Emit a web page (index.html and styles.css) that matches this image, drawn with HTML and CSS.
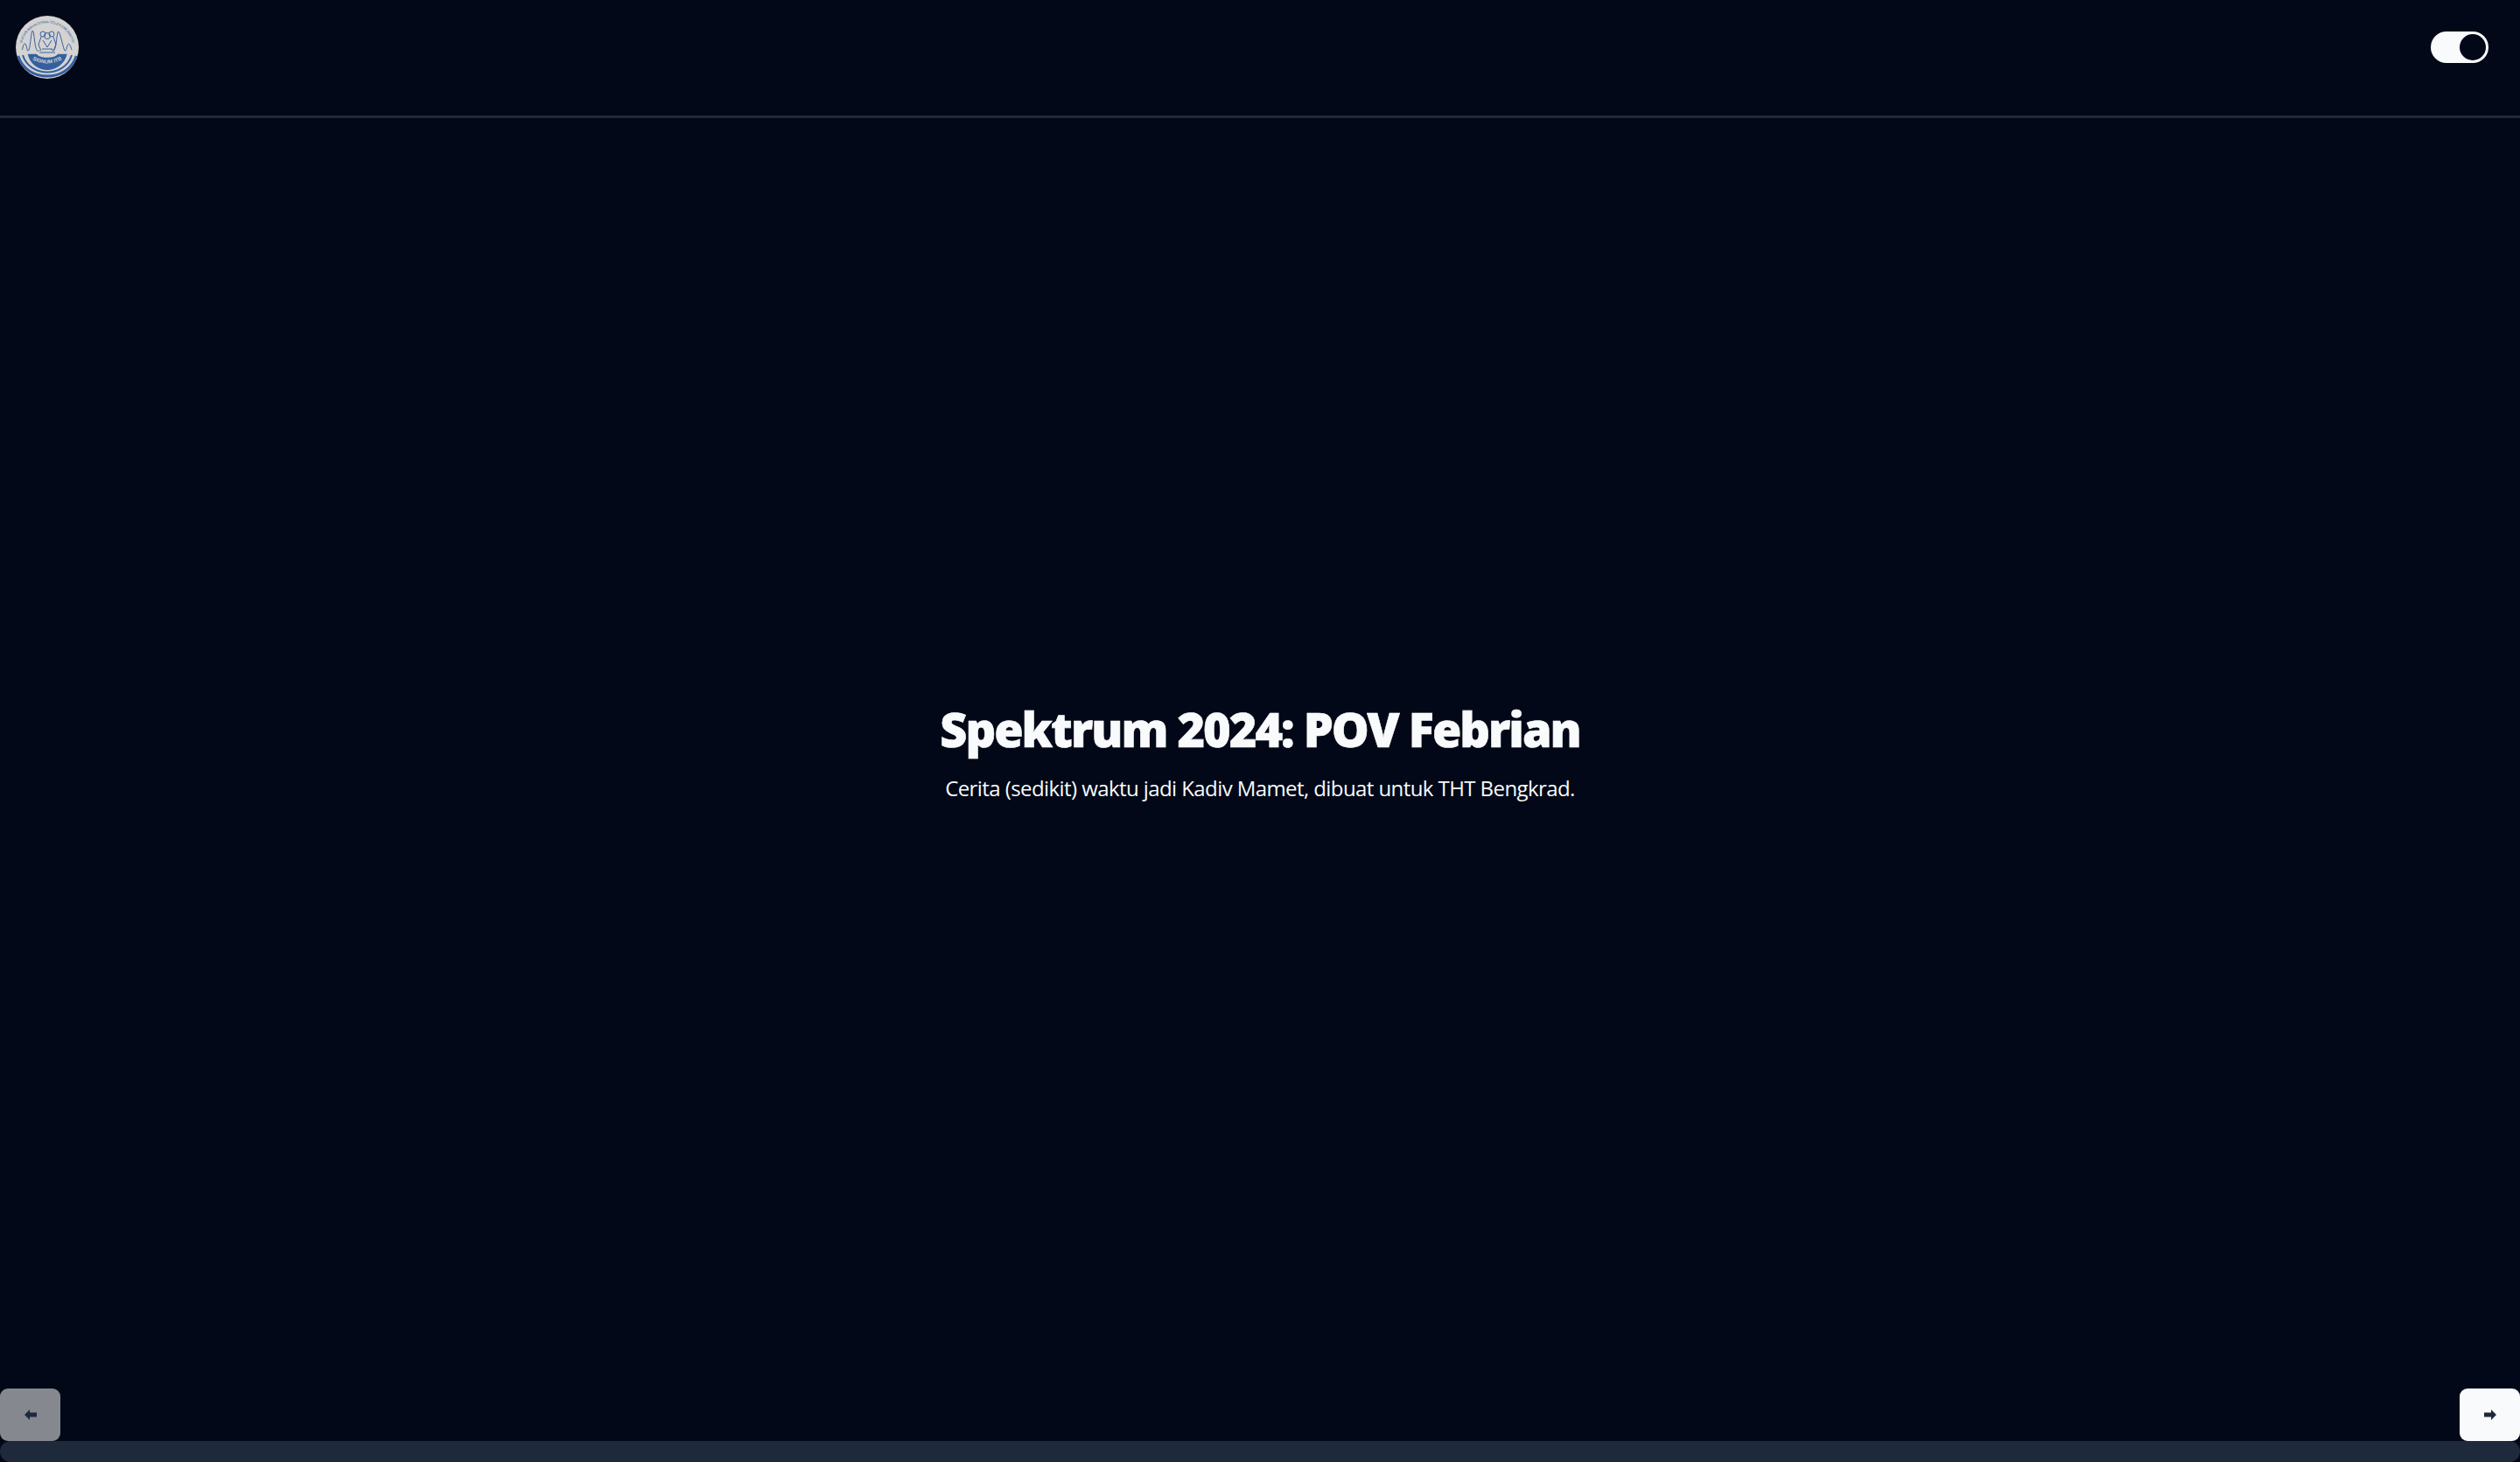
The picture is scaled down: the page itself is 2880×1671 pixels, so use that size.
FILE: index.html
```html
<!DOCTYPE html>
<html lang="en">
<head>
    <meta charset="UTF-8">
    <meta name="viewport" content="width=device-width, initial-scale=1.0">
    <title>Spektrum 2024: POV Febrian</title>
    <link rel="stylesheet" href="styles.css">
</head>
<body>
    <header class="topbar">
        <svg class="logo" viewBox="0 0 72 72">
            <defs>
                <path id="logo-arc" d="M6.5 38 A29.5 29.5 0 0 1 65.5 38"></path>
                <path id="logo-smile" d="M17 49 Q36 60 55 49"></path>
                <clipPath id="logo-clip"><circle cx="36" cy="36" r="36"></circle></clipPath>
            </defs>
            <circle cx="36" cy="36" r="36" fill="#d4d3d2"></circle>
            <text class="logo-ring"><textPath href="#logo-arc" startOffset="50%" text-anchor="middle">IKATAN MAHASISWA TELEKOMUNIKASI</textPath></text>
            <path class="logo-line" d="M7.5 39 C8.5 33 10 30 11.5 33 C13 36 13 43 15 39 C17 34 17.5 17 19.3 17 C21 17 21.5 36 24 39 C25 41 26 41 27 39"></path>
            <path class="logo-line" d="M64 39 C63 36 61.5 30 59.5 33 C58 36 57.5 43 55.5 39 C53.5 34 50.5 18 48.7 18 C47 18 46.5 36 44 39 C43 41 42 41 41 38"></path>
            <circle class="logo-line" cx="31" cy="21" r="3"></circle>
            <circle class="logo-line" cx="41" cy="21" r="3"></circle>
            <circle class="logo-line" cx="36" cy="23" r="3.5"></circle>
            <path class="logo-line" d="M29 24 L26 33 L29 40 M43 24 L46 33 L43 40 M31 28 L36 36 L41 28 M27 42 H45 M30 38 H42"></path>
            <g clip-path="url(#logo-clip)">
                <path d="M13.7 43.7 H24 C27 49 45 49 48 43.7 H58.7 C56 55 46 62 36 62 C26 62 16 55 13.7 43.7Z" fill="#335f9f"></path>
                <path class="logo-band" d="M2.7 46 C8 62 22 69 36 69 C50 69 64 62 69.3 46"></path>
                <path class="logo-stripe" d="M8 45 C12 58 24 64.5 36 64.5 C48 64.5 60 58 64 45"></path>
            </g>
            <text class="logo-name"><textPath href="#logo-smile" startOffset="50%" text-anchor="middle">SIGNUM ITB</textPath></text>
        </svg>
        <div class="toggle"><span class="toggle-knob"></span></div>
    </header>

    <main class="cover">
        <h1>Spektrum 2024: POV Febrian</h1>
        <p>Cerita (sedikit) waktu jadi Kadiv Mamet, dibuat untuk THT Bengkrad.</p>
    </main>

    <div class="slide-nav">
        <button class="nav-btn nav-disabled" type="button">
            <svg viewBox="0 0 14 12"><path d="M0 6 L6 0 V3.5 H14 V8.5 H6 V12Z"></path></svg>
        </button>
        <button class="nav-btn" type="button">
            <svg viewBox="0 0 14 12"><path d="M14 6 L8 0 V3.5 H0 V8.5 H8 V12Z"></path></svg>
        </button>
    </div>
    <div class="progress"></div>
</body>
</html>
```

FILE: styles.css
```css
*{
    margin: 0;
    padding: 0;
    box-sizing: border-box;
}
html, body{
    height: 100%;
}
body{
    display: flex;
    flex-direction: column;
    background-color: #020817;
    color: #f8fafc;
    font-family: "Open Sans", "Noto Sans", sans-serif;
}
.topbar{
    display: flex;
    justify-content: space-between;
    align-items: flex-start;
    height: 135px;
    padding: 18px 36px 0 18px;
    border-bottom: 3px solid #1e293b;
}
.logo{
    width: 72px;
    height: 72px;
}
.logo-ring{
    font-family: "Liberation Sans", sans-serif;
    font-size: 4.2px;
    fill: #335f9f;
}
.logo-name{
    font-family: "Liberation Sans", sans-serif;
    font-size: 6px;
    font-weight: bold;
    fill: #d4d3d2;
}
.logo-line{
    fill: none;
    stroke: #3a609f;
    stroke-width: 1;
}
.logo-band{
    fill: none;
    stroke: #335f9f;
    stroke-width: 3;
}
.logo-stripe{
    fill: none;
    stroke: #335f9f;
    stroke-width: 2;
}
.toggle{
    display: flex;
    justify-content: flex-end;
    align-items: center;
    width: 66px;
    height: 36px;
    margin-top: 18px;
    padding: 3px;
    border-radius: 18px;
    background-color: #f8fafc;
}
.toggle-knob{
    width: 30px;
    height: 30px;
    border-radius: 50%;
    background-color: #020817;
}
.cover{
    flex: 1;
    display: flex;
    flex-direction: column;
    justify-content: center;
    align-items: center;
    text-align: center;
    padding-bottom: 6px;
}
h1{
    font-family: "Noto Sans", "Open Sans", sans-serif;
    font-size: 54px;
    font-weight: 900;
    line-height: 72px;
    letter-spacing: -2px;
    -webkit-text-stroke: 0.6px #f8fafc;
}
p{
    margin-top: 14px;
    font-size: 24px;
    line-height: 36px;
    letter-spacing: -0.58px;
}
.slide-nav{
    display: flex;
    justify-content: space-between;
}
.nav-btn{
    display: flex;
    justify-content: center;
    align-items: center;
    width: 69px;
    height: 60px;
    border: none;
    border-radius: 9px;
    background-color: #f8fafc;
}
.nav-disabled{
    background-color: #85888f;
}
.nav-btn svg{
    width: 14px;
    height: 12px;
    fill: #1e293b;
}
.progress{
    height: 24px;
    border-radius: 12px;
    background-color: #1e293b;
}
```
